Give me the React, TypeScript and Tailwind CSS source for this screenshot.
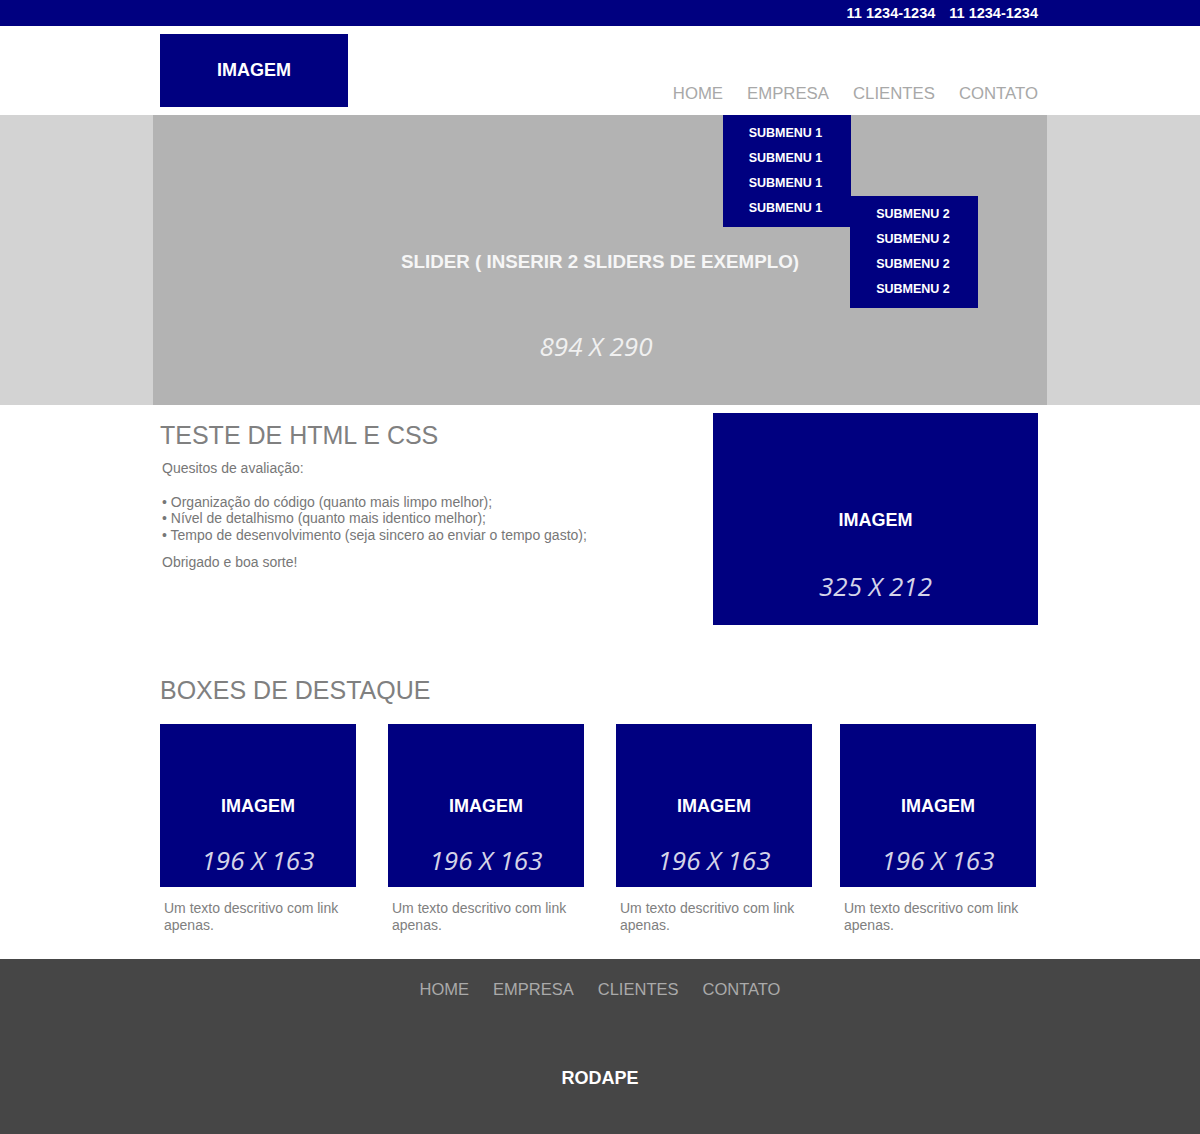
const navItems = ["HOME", "EMPRESA", "CLIENTES", "CONTATO"];

const boxes = [
    { id: 1, space: "" },
    { id: 2, space: "ml-[32px]" },
    { id: 3, space: "ml-[32px]" },
    { id: 4, space: "ml-[28px]" },
];

const font_base = "font-['Liberation_Sans',Arial,sans-serif]";
const font_size = "font-['Open_Sans',sans-serif] italic font-normal";

export default function App() {
    const wrap = "w-[894px] mx-auto pl-[7px] pr-[9px]";

    return (
        <div className={font_base + " bg-white"}>
            {/* top bar */}
            <div className="h-[26px] bg-[#000080]">
                <div className={wrap + " h-full pt-[2px] flex justify-end items-center gap-[14px] text-[14.5px] font-bold text-white"}>
                    <span>11 1234-1234</span>
                    <span>11 1234-1234</span>
                </div>
            </div>

            {/* header */}
            <header className={wrap + " h-[89px] flex justify-between"}>
                <div className="mt-[8px] w-[188px] h-[73px] bg-[#000080] flex items-center justify-center text-white text-[18px] font-bold">
                    IMAGEM
                </div>
                <nav className="self-end pb-[12px] flex gap-[24px] text-[16.75px] leading-[18px] text-[#a8a8a8]">
                    {navItems.map((item) => (
                        <a key={"nav" + item} href="#">{item}</a>
                    ))}
                </nav>
            </header>

            {/* slider */}
            <div className="bg-[#d3d3d3]">
                <div className="relative w-[894px] h-[290px] mx-auto bg-[#b3b3b3] flex flex-col items-center">
                    <p className="pt-[136px] text-[18.75px] leading-[22px] font-bold text-[#f6f6f6]">
                        SLIDER ( INSERIR 2 SLIDERS DE EXEMPLO)
                    </p>
                    <p className={font_size + " mt-[56px] mr-[8px] text-[26px] leading-[34px] text-[#f0f0f0]"}>
                        894 X 290
                    </p>

                    <ul className="absolute left-[570px] top-0 w-[128px] h-[112px] bg-[#000080] pt-[6px] text-center text-[12.5px] font-bold text-white">
                        {[1, 2, 3, 4].map((n) => (
                            <li key={"sub1" + n} className="leading-[25px] pr-[3px]">SUBMENU 1</li>
                        ))}
                    </ul>
                    <ul className="absolute left-[697px] top-[81px] w-[128px] h-[112px] bg-[#000080] pt-[6px] text-center text-[12.5px] font-bold text-white">
                        {[1, 2, 3, 4].map((n) => (
                            <li key={"sub2" + n} className="leading-[25px] pr-[2px]">SUBMENU 2</li>
                        ))}
                    </ul>
                </div>
            </div>

            {/* content */}
            <section className={wrap + " pt-[8px] flex justify-between"}>
                <div className="pt-[8px]">
                    <h1 className="text-[25px] leading-[29px] text-[#808080]">TESTE DE HTML E CSS</h1>
                    <div className="mt-[10px] pl-[2px] text-[14px] leading-[16.75px] text-[#777777]">
                        <p>Quesitos de avaliação:</p>
                        <br />
                        <p>• Organização do código (quanto mais limpo melhor);</p>
                        <p>• Nível de detalhismo (quanto mais identico melhor);</p>
                        <p>• Tempo de desenvolvimento (seja sincero ao enviar o tempo gasto);</p>
                        <p className="mt-[10px]">Obrigado e boa sorte!</p>
                    </div>
                </div>
                <div className="w-[325px] h-[212px] bg-[#000080] flex flex-col items-center">
                    <p className="pt-[97px] text-[18px] leading-[21px] font-bold text-white">IMAGEM</p>
                    <p className={font_size + " mt-[38px] text-[26px] leading-[34px] text-[#d4d4e8]"}>325 X 212</p>
                </div>
            </section>

            {/* boxes */}
            <section className={wrap + " pt-[51px]"}>
                <h2 className="text-[25px] leading-[29px] text-[#808080]">BOXES DE DESTAQUE</h2>
                <div className="mt-[19px] flex">
                    {boxes.map((b) => (
                        <div key={"box" + b.id} className={"w-[196px] " + b.space}>
                            <div className="h-[163px] bg-[#000080] flex flex-col items-center">
                                <p className="pt-[72px] text-[18px] leading-[21px] font-bold text-white">IMAGEM</p>
                                <p className={font_size + " mt-[26px] text-[26px] leading-[34px] text-[#d4d4e8]"}>196 X 163</p>
                            </div>
                            <p className="mt-[13px] pl-[4px] text-[14px] leading-[17px] text-[#808080]">
                                Um texto descritivo com link apenas.
                            </p>
                        </div>
                    ))}
                </div>
            </section>

            {/* footer */}
            <footer className="mt-[25px] h-[175px] bg-[#464646] flex flex-col items-center">
                <nav className="pt-[21px] flex gap-[24px] text-[16.5px] leading-[18px] text-[#aaaaaa]">
                    {navItems.map((item) => (
                        <a key={"foot" + item} href="#">{item}</a>
                    ))}
                </nav>
                <p className="mt-[70px] text-[18px] leading-[21px] font-bold text-white">RODAPE</p>
            </footer>
        </div>
    );
}
